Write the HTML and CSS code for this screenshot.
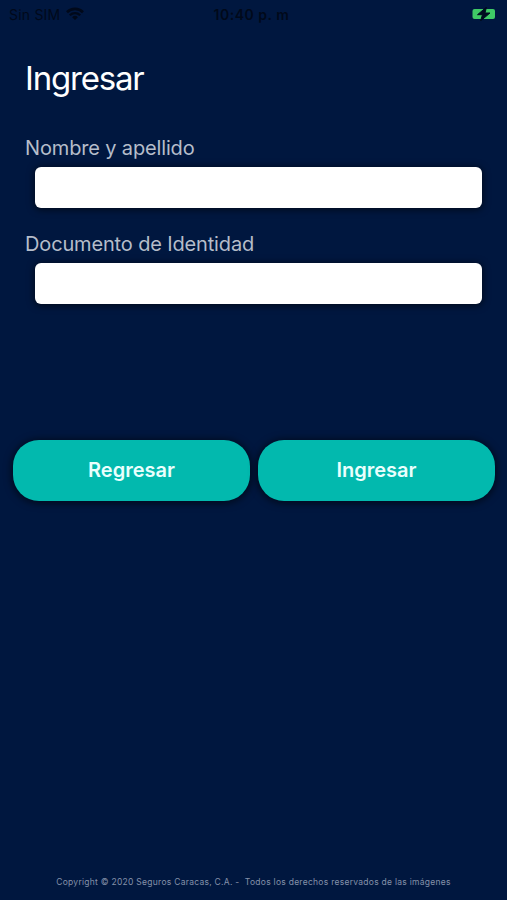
FILE: index.html
```html
<!DOCTYPE html>
<html lang="es">
<head>
    <meta charset="UTF-8">
    <meta name="viewport" content="width=device-width, initial-scale=1.0">
    <title>Ingresar</title>
    <link rel="stylesheet" href="styles.css">
</head>
<body>

    <div class="screen">
        <header class="status-bar">
            <div class="carrier">
                <span class="carrier-name">Sin SIM</span>
                <svg class="wifi" viewBox="0 0 18 13" width="18" height="13">
                    <path d="M1 5.2a11.4 11.4 0 0 1 16 0" fill="none" stroke="currentColor" stroke-width="2.6"/>
                    <path d="M3.8 8.2a7.4 7.4 0 0 1 10.4 0" fill="none" stroke="currentColor" stroke-width="2.3"/>
                    <path d="M9 13 6.1 10.2a4.1 4.1 0 0 1 5.8 0z" fill="currentColor"/>
                </svg>
            </div>
            <span class="time">10:40 p. m</span>
            <div class="battery">
                <svg viewBox="0 0 28 14" width="28" height="14">
                    <rect x="2.5" y="2" width="22.5" height="10" rx="2" fill="#3fca66"/>
                    <path d="M16.5 0 7.5 7.7h5L10.5 14l9.5-8h-5z" fill="#000d20" stroke="#000d20" stroke-width="1"/>
                </svg>
            </div>
        </header>

        <main class="content">
            <h1>Ingresar</h1>

            <form class="login-form">
                <div class="field">
                    <label for="nombre">Nombre y apellido</label>
                    <input type="text" id="nombre">
                </div>
                <div class="field">
                    <label for="documento">Documento de Identidad</label>
                    <input type="text" id="documento">
                </div>

                <div class="buttons">
                    <button type="button">Regresar</button>
                    <button type="button">Ingresar</button>
                </div>
            </form>
        </main>

        <footer>Copyright © 2020 Seguros Caracas, C.A. -&nbsp; Todos los derechos reservados de las imágenes</footer>
    </div>

</body>
</html>
```
FILE: styles.css
```css
* {
    box-sizing: border-box;
}

body {
    margin: 0;
    font-family: Inter, "Liberation Sans", sans-serif;
    background-color: #00173f;
    color: #fff;
}

.screen {
    display: flex;
    flex-direction: column;
    height: 900px;
    overflow: hidden;
}

.status-bar {
    display: grid;
    grid-template-columns: 1fr auto 1fr;
    align-items: center;
    height: 28px;
    padding: 0 9px;
    color: #00091a;
    font-size: 14px;
}

.carrier {
    display: flex;
    align-items: center;
    gap: 6px;
}

.carrier-name {
    letter-spacing: 0.2px;
}

.wifi {
    margin-top: -2px;
}

.time {
    margin-left: -4px;
    font-weight: 600;
    letter-spacing: 0.5px;
}

.battery {
    display: flex;
    justify-content: flex-end;
}

.content {
    flex: 1;
    padding: 0 12px 0 13px;
}

h1 {
    margin: 30px 0 0 12px;
    font-size: 33px;
    font-weight: 400;
    line-height: 40px;
    letter-spacing: -1.2px;
}

.field {
    height: 96px;
}

.login-form {
    padding-top: 36px;
}

label {
    display: block;
    margin-left: 12px;
    color: #b5bdca;
    font-size: 20px;
    line-height: 28px;
    letter-spacing: -0.15px;
    white-space: nowrap;
}

input {
    display: block;
    width: 447px;
    height: 41px;
    margin: 5px 0 0 22px;
    padding: 0 10px;
    border: none;
    border-radius: 6px;
    background-color: #fff;
    box-shadow: 0 1px 7px 1px rgba(0, 0, 0, 0.55);
}

.buttons {
    display: flex;
    gap: 8px;
    margin-top: 114px;
}

button {
    flex: 1;
    height: 61px;
    padding: 0 0 2px;
    border: none;
    border-radius: 26px;
    background-color: #02b9ae;
    color: #eafffd;
    font-family: inherit;
    font-size: 20px;
    font-weight: 600;
    letter-spacing: 0;
    box-shadow: 0 1px 7px 2px rgba(0, 0, 0, 0.5);
}

footer {
    padding-bottom: 11px;
    color: #8491a9;
    font-size: 8.5px;
    line-height: 14px;
    letter-spacing: 0.27px;
    text-align: center;
    white-space: nowrap;
}
```
